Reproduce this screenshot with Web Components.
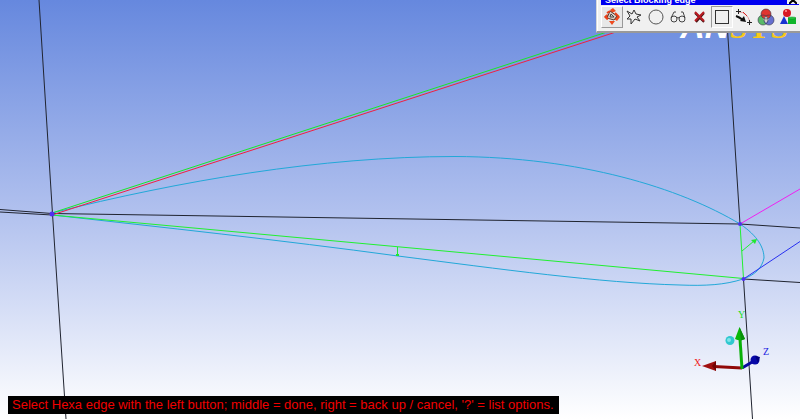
<!DOCTYPE html>
<html lang="en">
<head>
<meta charset="UTF-8">
<title>Blocking view</title>
<style>
    html, body {
        margin: 0;
        height: 100%;
    }
    body {
        font-family: "Liberation Sans", Arial, sans-serif;
        font-size: 13px;
        overflow: hidden;
    }
</style>
</head>
<body>
<model-viewport>
    <brand-mark slot="brand"></brand-mark>
    <tool-window slot="window" heading="Select Blocking edge">
        <tool-button label="Toggle dynamics" raised>
            <svg viewBox="0 0 18 18">
                <path d="M1 9 L4 6 L7 9 L4 12Z M12 6 L17 9 L14 13 L11 11Z M6 13 L12 13 L9 17Z M7 2 L10 0 L13 3 L9 5Z" fill="#ee4a1e"/>
                <path d="M4 10 L7 3 L14 8 L11 12Z" fill="#d8cec6" stroke="#5a3a30"/>
                <path d="M4 5 L7 3 M2 8 L5 11 M12 5 L16 9" fill="none" stroke="#e8401c" stroke-width="2"/>
                <path d="M8 6 L7 9 L11 9Z" fill="none" stroke="#444"/>
            </svg>
        </tool-button>
        <tool-button label="Select in polygon">
            <svg viewBox="0 0 18 18"><path d="M2 3 L7 6 L9 2 L11 6 L16 7 L12 9 L15 13 L10 11 L6 16 L6 11 L2 11 L5 8Z" fill="none" stroke="#333"/></svg>
        </tool-button>
        <tool-button label="Select in circle">
            <svg viewBox="0 0 18 18"><circle cx="9" cy="9" r="7" fill="none" stroke="#555"/></svg>
        </tool-button>
        <tool-button label="Select visible">
            <svg viewBox="0 0 18 18"><g fill="none" stroke="#444"><circle cx="5" cy="11" r="3"/><circle cx="13" cy="11" r="3"/><path d="M8 10 Q9 9 10 10 M2 10 L5 4 L7 4 M16 10 L14 4 L12 4"/></g></svg>
        </tool-button>
        <tool-button label="Cancel selection">
            <svg viewBox="0 0 18 18"><path d="M4 5 L13 14 M13 5 L5 14" stroke="#4a1515" stroke-width="2"/><path d="M4 4 L13 13 M13 4 L4 13" stroke="#b81b22" stroke-width="2"/></svg>
        </tool-button>
        <tool-button label="Select in box" pressed>
            <svg viewBox="0 0 18 18"><rect x="2.5" y="2.5" width="13" height="13" fill="none" stroke="#333"/></svg>
        </tool-button>
        <tool-button label="Select connected edges">
            <svg viewBox="0 0 18 18">
                <path d="M4 4 Q12 4 15 14" fill="none" stroke="#d99"/>
                <path d="M8 4 L12 8" stroke="#d22"/>
                <path d="M1 3.500 H6 M3.500 1 V6 M12 14.500 H17 M14.500 12 V17" stroke="#222"/>
                <path d="M1 8 Q4 9 8 12" fill="none" stroke="#111" stroke-width="2"/>
                <path d="M9 8 L11 14 L5 13Z" fill="#111"/>
            </svg>
        </tool-button>
        <tool-button label="Select by part">
            <svg viewBox="0 0 18 18">
                <circle cx="6" cy="12" r="5" fill="#58b968"/>
                <circle cx="12" cy="12" r="5" fill="#6670cf"/>
                <circle cx="9" cy="6" r="5" fill="#df3430"/>
                <path d="M9 8 L12 11 L9 15 L6 11Z" fill="#d9d0cd"/>
                <g fill="none" stroke="#334" stroke-width=".6"><circle cx="6" cy="12" r="5"/><circle cx="12" cy="12" r="5"/><circle cx="9" cy="6" r="5"/></g>
            </svg>
        </tool-button>
        <tool-button label="Select by shape">
            <svg viewBox="0 0 18 18">
                <circle cx="8" cy="5" r="4" fill="#d81824"/><circle cx="7" cy="3" r="1" fill="#f99"/>
                <path d="M5 8 L9 16 H1Z" fill="#1733d1"/>
                <path d="M9 10 V16 H17 V10Z" fill="#10b52b"/><ellipse cx="13" cy="10" rx="4" ry="1" fill="#2bd747" stroke="#0a7a1c" stroke-width=".5"/>
            </svg>
        </tool-button>
    </tool-window>
    <blocking-scene></blocking-scene>
    <prompt-line slot="prompt">Select Hexa edge with the left button; middle = done, right = back up / cancel, '?' = list options.</prompt-line>
</model-viewport>

<script>
class ModelViewport extends HTMLElement {
    connectedCallback() {
        this.attachShadow({ mode: 'open' });
        this.shadowRoot.innerHTML = `
            <style>
                :host {
                    display: grid;
                    position: relative;
                    min-height: 100vh;
                    overflow: hidden;
                    background: linear-gradient(#6688de, #b0c0ee 50%, #ffffff);
                }
                .prompt {
                    position: absolute;
                    left: 8px;
                    bottom: 5px;
                }
                .brand {
                    position: absolute;
                    top: 6px;
                    right: 12px;
                }
                .window {
                    position: absolute;
                    top: 0;
                    right: 0;
                }
            </style>
            <slot></slot>
            <div class="brand"><slot name="brand"></slot></div>
            <div class="window"><slot name="window"></slot></div>
            <div class="prompt"><slot name="prompt"></slot></div>
        `;
    }
}
customElements.define('model-viewport', ModelViewport);

class BrandMark extends HTMLElement {
    connectedCallback() {
        this.attachShadow({ mode: 'open' });
        this.shadowRoot.innerHTML = `
            <style>
                :host {
                    display: flex;
                    align-items: baseline;
                    font-size: 34px;
                    line-height: 40px;
                    font-weight: bold;
                }
                .first {
                    color: #ffffff;
                    font-style: italic;
                }
                .last {
                    color: #f8c818;
                    font-family: "Liberation Serif", serif;
                    font-size: 32px;
                }
            </style>
            <span class="first">AN</span><span class="last">SYS</span>
        `;
    }
}
customElements.define('brand-mark', BrandMark);

class ToolWindow extends HTMLElement {
    connectedCallback() {
        this.attachShadow({ mode: 'open' });
        this.shadowRoot.innerHTML = `
            <style>
                :host {
                    display: block;
                    background: #f0f0f0;
                    border-left: 1px solid #d8d8d8;
                    border-bottom: 2px solid #999999;
                    box-shadow: inset 1px 0 #ffffff;
                    padding: 0 1px 2px 4px;
                }
                header {
                    display: flex;
                    justify-content: space-between;
                    align-items: flex-end;
                    height: 5px;
                    padding-left: 4px;
                    background: #0000f0;
                    color: #ffffff;
                    font-size: 9px;
                    line-height: 10px;
                    font-weight: bold;
                }
                .close {
                    display: flex;
                    align-items: flex-end;
                    justify-content: center;
                    width: 12px;
                    height: 4px;
                    margin: 0 0 1px 0;
                    padding: 0;
                    border: 0;
                    background: #f0f0f0;
                    overflow: hidden;
                }
                .tools {
                    display: flex;
                    padding: 1px 0;
                }
            </style>
            <header>
                <span></span>
                <button class="close" aria-label="Close"><svg width="8" height="8"><path d="M0 0 L8 8 M8 0 L0 8" stroke="#000" stroke-width="2"/></svg></button>
            </header>
            <div class="tools"><slot></slot></div>
        `;
        this.shadowRoot.querySelector('header span').textContent = this.getAttribute('heading');
    }
}
customElements.define('tool-window', ToolWindow);

class ToolButton extends HTMLElement {
    connectedCallback() {
        this.attachShadow({ mode: 'open' });
        this.shadowRoot.innerHTML = `
            <style>
                :host {
                    display: block;
                }
                button {
                    display: flex;
                    align-items: center;
                    justify-content: center;
                    width: 22px;
                    height: 22px;
                    padding: 0;
                    border: 1px solid transparent;
                    background: none;
                }
                :host([raised]) button {
                    border-color: #ffffff #999999 #999999 #ffffff;
                    background: #e8e8e8;
                }
                :host([pressed]) button {
                    border-color: #999999 #ffffff #ffffff #999999;
                }
                ::slotted(svg) {
                    width: 18px;
                    height: 18px;
                }
            </style>
            <button><slot></slot></button>
        `;
        this.shadowRoot.querySelector('button').setAttribute('aria-label', this.getAttribute('label'));
    }
}
customElements.define('tool-button', ToolButton);

class BlockingScene extends HTMLElement {
    connectedCallback() {
        this.attachShadow({ mode: 'open' });
        this.shadowRoot.innerHTML = `
            <style>
                :host {
                    display: block;
                }
                svg {
                    display: block;
                    width: 100%;
                    height: 100vh;
                }
                .wire {
                    fill: none;
                    stroke-width: 1;
                }
                text {
                    font-family: "Liberation Serif", serif;
                    font-size: 10px;
                }
            </style>
            <svg viewBox="0 0 800 419" preserveAspectRatio="xMidYMid slice">
                <!-- block edges -->
                <g class="wire" stroke="#202430">
                    <path d="M39 0 L52.5 214 L66 419"/>
                    <path d="M0 209.5 L52 213.5 M0 212 L52 215"/>
                    <path d="M52 213.5 L740 224 L800 228"/>
                    <path d="M727.5 30 L740 224 M743.5 279 L752.5 419 M743.5 279 L800 282.5"/>
                </g>
                <!-- airfoil curve -->
                <path class="wire" stroke="#22a8d8" d="M52 213 C180 181 320 156.5 455 156.5 C580 157 680 188 740 224 C758 236 764 248 764 258 C762 268 755 275 743 279 C725 285 705 286 680 285 C600 283 500 269 398 256 C280 240 160 227 52 215"/>
                <g class="wire">
                    <path stroke="#f02040" d="M52 215 L616 32"/>
                    <path stroke="#18e828" d="M52 213 L607 32"/>
                    <path stroke="#20f030" d="M52 215 L743.5 278.5 L740 224 M397.5 247 V255"/>
                    <path stroke="#20f030" d="M742 251 L754 241"/>
                    <path stroke="#f020f0" d="M740 224 L800 189"/>
                    <path stroke="#2830f0" d="M743.5 279 L800 241.5"/>
                </g>
                <path fill="#20e830" d="M757 239 L755 244 L751 240Z M396 254 H399 V256 H396Z"/>
                <g fill="#5030f0">
                    <circle cx="52" cy="214" r="2.5"/>
                    <circle cx="740" cy="224" r="2"/>
                    <circle cx="743.5" cy="279" r="2"/>
                </g>
                <!-- axis triad -->
                <path d="M742 368 L714 366.5" stroke="#900808" stroke-width="3"/>
                <path d="M702 366 L716 361 V371Z" fill="#a01010"/>
                <path d="M716 361 V371 L712 366Z" fill="#700404"/>
                <path d="M742 368 L753 361.5" stroke="#0808a0" stroke-width="3"/>
                <circle cx="755" cy="360" r="4.5" fill="#0808a8"/>
                <path d="M755 356 L760 357 L758 363Z" fill="#000080"/>
                <path d="M742 369 L740 339" stroke="#08b008" stroke-width="3"/>
                <path d="M739.5 327 L745 339 Q740 341.5 735 339Z" fill="#08b808"/>
                <path d="M739.5 327 L745 339 L741 340.5Z" fill="#089008"/>
                <circle cx="730" cy="340.5" r="4.5" fill="#30c8d0"/>
                <circle cx="729" cy="340" r="2" fill="#80e4e8"/>
                <text x="694" y="366" fill="#f02020">X</text>
                <text x="738" y="318" fill="#20e020">Y</text>
                <text x="763" y="355" fill="#2020e0">Z</text>
            </svg>
        `;
    }
}
customElements.define('blocking-scene', BlockingScene);

class PromptLine extends HTMLElement {
    connectedCallback() {
        this.attachShadow({ mode: 'open' });
        this.shadowRoot.innerHTML = `
            <style>
                :host {
                    display: block;
                    padding: 0 5px 0 4px;
                    background: #000000;
                    color: #f00000;
                    font-size: 13px;
                    line-height: 18px;
                    white-space: nowrap;
                }
            </style>
            <slot></slot>
        `;
    }
}
customElements.define('prompt-line', PromptLine);
</script>
</body>
</html>
